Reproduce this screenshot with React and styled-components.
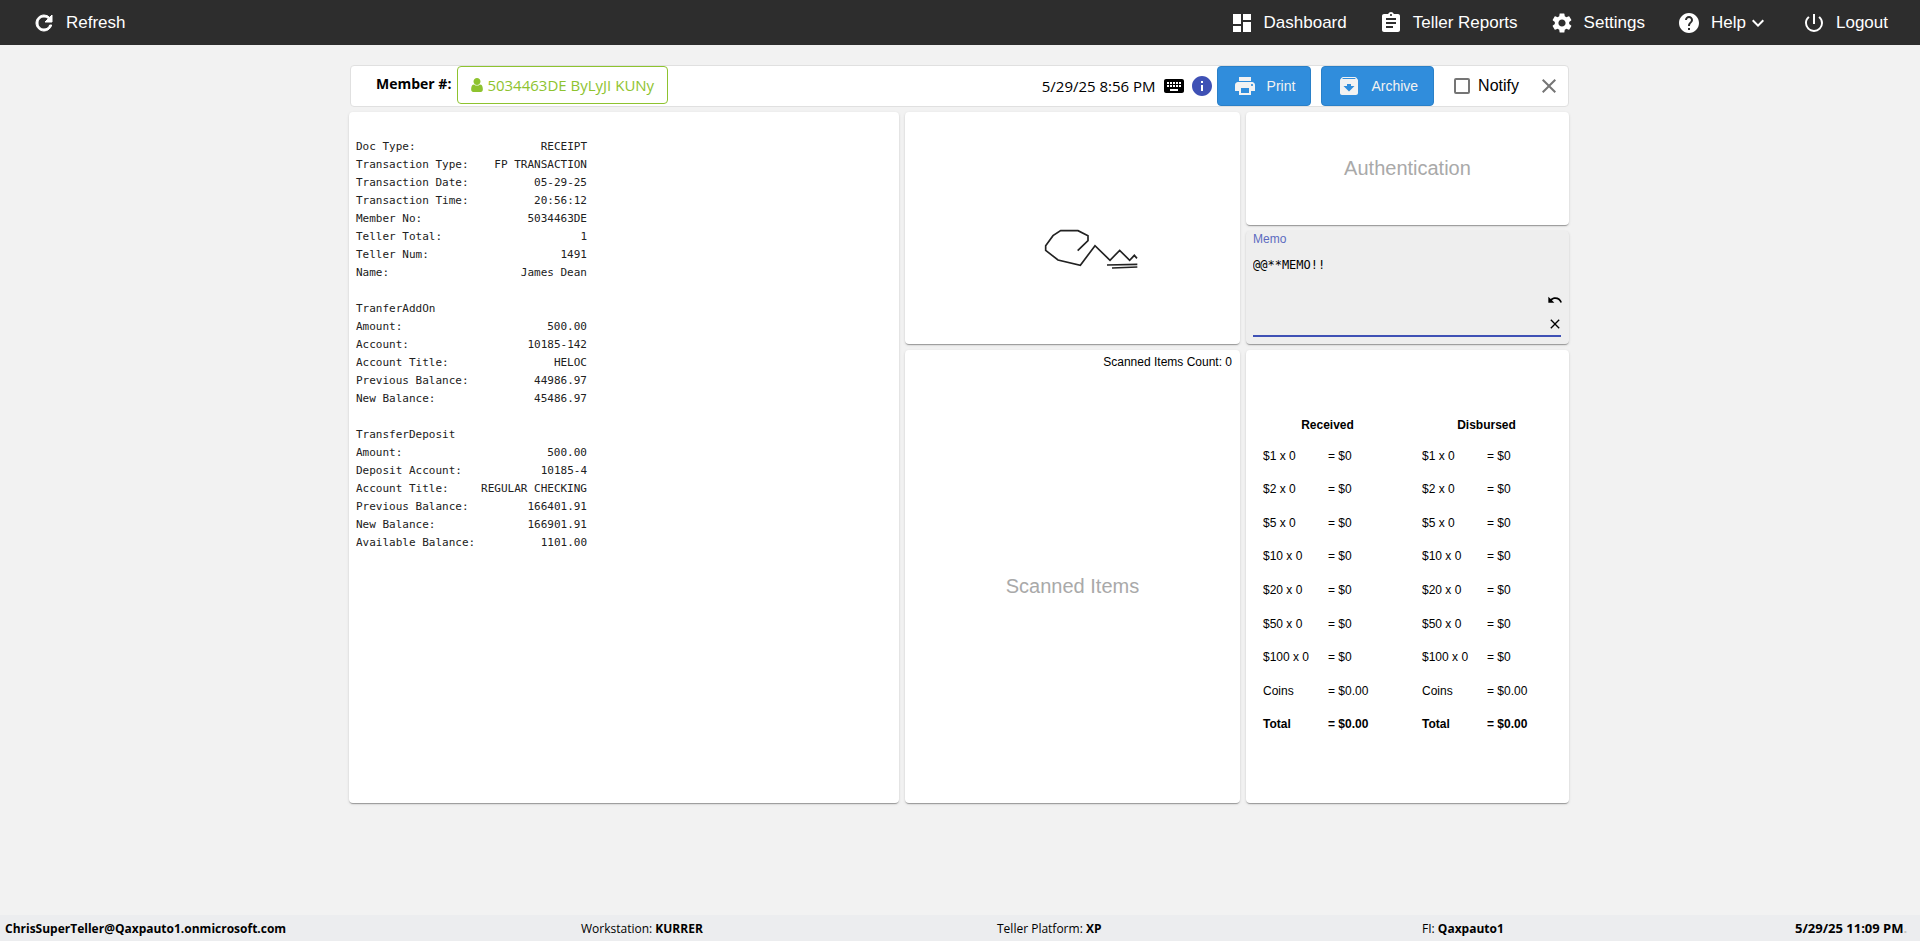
import React, { useEffect, useRef, useState } from "react";
import styled, { createGlobalStyle } from "styled-components";
import {
  MdRefresh,
  MdDashboard,
  MdAssignment,
  MdSettings,
  MdHelp,
  MdExpandMore,
  MdPowerSettingsNew,
  MdKeyboard,
  MdInfo,
  MdPrint,
  MdArchive,
  MdClose,
  MdUndo,
} from "react-icons/md";

const sans = `"Liberation Sans", Arial, sans-serif`;
const humanist = `"Segoe UI", "Open Sans", sans-serif`;
const mono = `Consolas, "DejaVu Sans Mono", monospace`;

const GlobalStyle = createGlobalStyle`
  * {
    box-sizing: border-box;
  }
  body {
    margin: 0;
    background-color: #f2f2f2;
    color: #000;
    font-family: ${sans};
  }
  button {
    cursor: pointer;
  }
`;

const Page = styled.div`
  display: flex;
  flex-direction: column;
  min-height: 100vh;
`;

//Top navigation
const TopBar = styled.header`
  display: flex;
  justify-content: space-between;
  height: 45px;
  padding: 0 16px;
  background-color: #2d2d2d;
`;
const Nav = styled.nav`
  display: flex;
`;
const NavLink = styled.a`
  display: flex;
  align-items: center;
  padding: 0 16px;
  color: #fff;
  font-size: 17px;
  text-decoration: none;
  svg {
    flex: none;
  }
  span {
    margin-left: 10px;
  }
`;
const RefreshIcon = styled(MdRefresh)`
  path:last-child {
    stroke-width: 1px;
  }
`;

const Main = styled.main`
  width: 100%;
  max-width: 1222px;
  margin: 0 auto;
  padding: 20px 2px 24px 0;
`;

//Member, date and actions row
const Toolbar = styled.div`
  display: flex;
  justify-content: space-between;
  min-height: 42px;
  margin: 0 0 5px 1px;
  border: 1px solid #e0e0e0;
  border-radius: 4px;
  background-color: #fff;
`;
const MemberGroup = styled.div`
  display: flex;
  align-items: flex-start;
  padding-left: 25px;
`;
const MemberLabel = styled.span`
  margin-right: 6px;
  font-family: ${humanist};
  font-size: 14px;
  font-weight: 700;
  line-height: 36px;
`;
const MemberButton = styled.button`
  display: flex;
  align-items: center;
  gap: 4px;
  height: 38px;
  padding: 0 13px;
  border: 1px solid #8ec32f;
  border-radius: 4px;
  background-color: #fff;
  color: #8ec32f;
  font-family: ${humanist};
  font-size: 15px;
`;
const ActionGroup = styled.div`
  display: flex;
  align-items: center;
  padding-right: 7px;
`;
const DateText = styled.span`
  margin-right: 6px;
  font-family: ${humanist};
  font-size: 15px;
`;
const InfoIcon = styled(MdInfo)`
  margin: 0 3px 0 4px;
  color: #3f51b5;
`;
const ActionButton = styled.button`
  display: flex;
  align-items: center;
  gap: 10px;
  height: 40px;
  margin-right: 10px;
  padding: 0 15px;
  border: 1px solid #2a80c8;
  border-radius: 4px;
  background-color: #308ddc;
  color: #f2f2f2;
  font-family: ${sans};
  font-size: 14px;
`;
const NotifyLabel = styled.label`
  display: flex;
  align-items: center;
  gap: 8px;
  margin: 0 18px 0 10px;
  font-size: 16px;
  input {
    appearance: none;
    width: 16px;
    height: 16px;
    margin: 0;
    border: 2px solid #757575;
    border-radius: 2px;
  }
  input:checked {
    background-color: #3f51b5;
  }
`;
const IconButton = styled.button`
  display: flex;
  padding: 0;
  border: none;
  background: none;
  color: ${(props) => props.$color || "#000"};
`;

//Panels
const Board = styled.div`
  display: grid;
  grid-template-columns: 550fr 335fr 323fr;
  grid-template-rows: minmax(113px, auto) minmax(113px, auto) minmax(453px, auto);
  grid-template-areas:
    "receipt signature auth"
    "receipt signature memo"
    "receipt scanned cash";
  gap: 6px;
`;
const Card = styled.section`
  display: flex;
  flex-direction: column;
  grid-area: ${(props) => props.$area};
  border-radius: 4px;
  background-color: ${(props) => props.$bg || "#fff"};
  box-shadow: 0 2px 1px -1px rgba(0, 0, 0, 0.2), 0 1px 1px 0 rgba(0, 0, 0, 0.14),
    0 1px 3px 0 rgba(0, 0, 0, 0.12);
`;
const Placeholder = styled.div`
  display: flex;
  flex: 1;
  align-items: center;
  justify-content: center;
  color: #a9a9a9;
  font-size: 20px;
`;
const ScannedCount = styled.div`
  padding: 5px 8px 0 0;
  font-size: 12px;
  line-height: 14px;
  text-align: right;
`;

const Receipt = styled.div`
  width: 231px;
  margin: 26px 0 0 7px;
  color: #212121;
  font-family: ${mono};
  font-size: 11px;
  line-height: 18px;
`;
const ReceiptBlock = styled.dl`
  margin: 0 0 18px;
`;
const ReceiptRow = styled.div`
  display: flex;
  justify-content: space-between;
  white-space: nowrap;
  dd {
    margin: 0;
  }
`;

const MemoField = styled.div`
  display: flex;
  flex: 1;
  flex-direction: column;
  margin: 0 8px 7px 7px;
  border-bottom: 2px solid #3f51b5;
  label {
    color: #5c6bc0;
    font-size: 12px;
    line-height: 16px;
  }
`;
const MemoBody = styled.div`
  display: flex;
  flex: 1;
`;
const MemoInput = styled.textarea`
  flex: 1;
  margin: 0;
  padding: 9px 0 0;
  border: none;
  outline: none;
  resize: none;
  background: none;
  caret-color: #3f51b5;
  color: #000;
  font-family: ${mono};
  font-size: 12px;
  line-height: 18px;
`;
const MemoActions = styled.div`
  display: flex;
  flex-direction: column;
  justify-content: flex-end;
  gap: 8px;
  margin-right: -2px;
  padding-bottom: 3px;
`;

const CashTable = styled.table`
  width: 318px;
  height: 331px;
  margin: 60px auto auto 2px;
  border-collapse: collapse;
  table-layout: fixed;
  font-size: 12px;
  th,
  td {
    padding: 0;
    text-align: left;
  }
  thead th {
    height: 29px;
    text-align: center;
  }
  tbody th,
  tbody td:nth-child(3) {
    padding-left: 15px;
  }
  tbody th {
    font-weight: 400;
  }
  tbody tr:last-child > * {
    font-weight: 700;
  }
`;
const CashCol = styled.col`
  width: ${(props) => props.$width}px;
`;

const Footer = styled.footer`
  display: grid;
  grid-template-columns: 576fr 416fr 425fr 373fr 120fr;
  align-items: center;
  height: 26px;
  margin-top: auto;
  padding: 0 5px;
  background-color: #ecedef;
  font-family: ${humanist};
  font-size: 12px;
  white-space: nowrap;
`;
const Clock = styled.b`
  font-size: 13px;
  span {
    color: #c8c4bc;
  }
`;

const navItems = [
  { label: "Dashboard", Icon: MdDashboard },
  { label: "Teller Reports", Icon: MdAssignment },
  { label: "Settings", Icon: MdSettings },
  { label: "Help", Icon: MdHelp, menu: true },
  { label: "Logout", Icon: MdPowerSettingsNew },
];

const receipt = [
  {
    rows: [
      ["Doc Type:", "RECEIPT"],
      ["Transaction Type:", "FP TRANSACTION"],
      ["Transaction Date:", "05-29-25"],
      ["Transaction Time:", "20:56:12"],
      ["Member No:", "5034463DE"],
      ["Teller Total:", "1"],
      ["Teller Num:", "1491"],
      ["Name:", "James Dean"],
    ],
  },
  {
    title: "TranferAddOn",
    rows: [
      ["Amount:", "500.00"],
      ["Account:", "10185-142"],
      ["Account Title:", "HELOC"],
      ["Previous Balance:", "44986.97"],
      ["New Balance:", "45486.97"],
    ],
  },
  {
    title: "TransferDeposit",
    rows: [
      ["Amount:", "500.00"],
      ["Deposit Account:", "10185-4"],
      ["Account Title:", "REGULAR CHECKING"],
      ["Previous Balance:", "166401.91"],
      ["New Balance:", "166901.91"],
      ["Available Balance:", "1101.00"],
    ],
  },
];

const cashRows = [
  ["$1 x 0", "= $0"],
  ["$2 x 0", "= $0"],
  ["$5 x 0", "= $0"],
  ["$10 x 0", "= $0"],
  ["$20 x 0", "= $0"],
  ["$50 x 0", "= $0"],
  ["$100 x 0", "= $0"],
  ["Coins", "= $0.00"],
  ["Total", "= $0.00"],
];

function UserIcon() {
  return (
    <svg width="12" height="14" viewBox="256 128 1280 1536" fill="currentColor" aria-hidden="true">
      <path d="M1536 1399q0 109-62.5 187t-150.5 78h-854q-88 0-150.5-78t-62.5-187q0-85 8.5-160.5t31.5-152 58.5-131 94-89 134.5-34.5q131 128 313 128t313-128q76 0 134.5 34.5t94 89 58.5 131 31.5 152 8.5 160.5zm-256-887q0 159-112.5 271.5t-271.5 112.5-271.5-112.5-112.5-271.5 112.5-271.5 271.5-112.5 271.5 112.5 112.5 271.5z" />
    </svg>
  );
}

function Signature() {
  return (
    <svg
      width="280"
      height="180"
      viewBox="0 0 840 540"
      fill="none"
      stroke="#222"
      strokeWidth="5"
      role="img"
      aria-label="Signature"
    >
      <path d="M434 338 465 308V293L435 278H383L360 293 338 323V337L375 366 442 382 486 323 531 367 560 337 590 367 604 352 612 361" />
      <path d="M522 381 613 379M537 390 613 387" />
    </svg>
  );
}

function MemoPanel() {
  const [memo, setMemo] = useState("@@**MEMO!!");
  const inputRef = useRef(null);

  useEffect(() => {
    const input = inputRef.current;
    input.focus();
    input.setSelectionRange(input.value.length, input.value.length);
  }, []);

  return (
    <Card $area="memo" $bg="#eee">
      <MemoField>
        <label htmlFor="memo">Memo</label>
        <MemoBody>
          <MemoInput
            id="memo"
            ref={inputRef}
            value={memo}
            spellCheck={false}
            onChange={(e) => setMemo(e.target.value)}
          />
          <MemoActions>
            <IconButton type="button" aria-label="Undo">
              <MdUndo size={16} />
            </IconButton>
            <IconButton type="button" aria-label="Clear" onClick={() => setMemo("")}>
              <MdClose size={16} />
            </IconButton>
          </MemoActions>
        </MemoBody>
      </MemoField>
    </Card>
  );
}

function App() {
  return (
    <Page>
      <GlobalStyle />
      <TopBar>
        <NavLink href="#refresh">
          <RefreshIcon size={24} />
          <span>Refresh</span>
        </NavLink>
        <Nav>
          {navItems.map(({ label, Icon, menu }) => (
            <NavLink key={label} href={`#${label}`}>
              <Icon size={24} />
              <span>{label}</span>
              {menu && <MdExpandMore size={24} />}
            </NavLink>
          ))}
        </Nav>
      </TopBar>
      <Main>
        <Toolbar>
          <MemberGroup>
            <MemberLabel>Member #:</MemberLabel>
            <MemberButton type="button">
              <UserIcon />
              5034463DE ByLyJI KUNy
            </MemberButton>
          </MemberGroup>
          <ActionGroup>
            <DateText>5/29/25 8:56 PM</DateText>
            <MdKeyboard size={24} />
            <InfoIcon size={24} />
            <ActionButton type="button">
              <MdPrint size={24} />
              Print
            </ActionButton>
            <ActionButton type="button">
              <MdArchive size={24} />
              Archive
            </ActionButton>
            <NotifyLabel>
              <input type="checkbox" />
              Notify
            </NotifyLabel>
            <IconButton type="button" aria-label="Close" $color="#757575">
              <MdClose size={24} />
            </IconButton>
          </ActionGroup>
        </Toolbar>
        <Board>
          <Card $area="receipt">
            <Receipt>
              {receipt.map((block, i) => (
                <React.Fragment key={i}>
                  {block.title && <div>{block.title}</div>}
                  <ReceiptBlock>
                    {block.rows.map(([name, value]) => (
                      <ReceiptRow key={name}>
                        <dt>{name}</dt>
                        <dd>{value}</dd>
                      </ReceiptRow>
                    ))}
                  </ReceiptBlock>
                </React.Fragment>
              ))}
            </Receipt>
          </Card>
          <Card $area="signature">
            <Placeholder>
              <Signature />
            </Placeholder>
          </Card>
          <Card $area="auth">
            <Placeholder>Authentication</Placeholder>
          </Card>
          <MemoPanel />
          <Card $area="scanned">
            <ScannedCount>Scanned Items Count: 0</ScannedCount>
            <Placeholder>Scanned Items</Placeholder>
          </Card>
          <Card $area="cash">
            <CashTable>
              <colgroup>
                <CashCol $width={80} />
                <CashCol $width={79} />
                <CashCol $width={80} />
                <CashCol $width={79} />
              </colgroup>
              <thead>
                <tr>
                  <th colSpan="2">Received</th>
                  <th colSpan="2">Disbursed</th>
                </tr>
              </thead>
              <tbody>
                {cashRows.map(([name, value]) => (
                  <tr key={name}>
                    <th scope="row">{name}</th>
                    <td>{value}</td>
                    <td>{name}</td>
                    <td>{value}</td>
                  </tr>
                ))}
              </tbody>
            </CashTable>
          </Card>
        </Board>
      </Main>
      <Footer>
        <b>ChrisSuperTeller@Qaxpauto1.onmicrosoft.com</b>
        <span>
          Workstation: <b>KURRER</b>
        </span>
        <span>
          Teller Platform: <b>XP</b>
        </span>
        <span>
          FI: <b>Qaxpauto1</b>
        </span>
        <Clock>
          5/29/25 11:09 PM<span>.</span>
        </Clock>
      </Footer>
    </Page>
  );
}

export default App;
